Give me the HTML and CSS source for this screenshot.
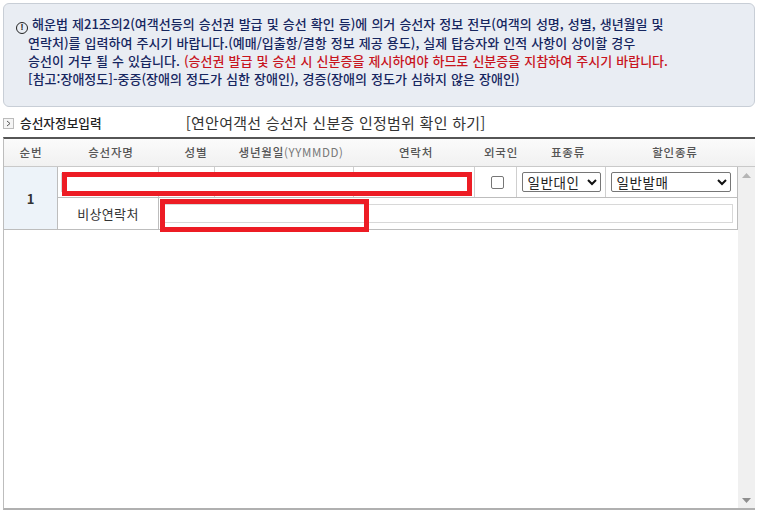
FILE: index.html
```html
<!DOCTYPE html>
<html lang="ko">
<head>
  <meta charset="UTF-8">
  <title>승선자정보입력</title>
  <link rel="stylesheet" href="styles.css">
</head>
<body>
  <div class="notice">
    <p><span class="notice-icon">!</span> 해운법 제21조의2(여객선등의 승선권 발급 및 승선 확인 등)에 의거 승선자 정보 전부(여객의 성명, 성별, 생년월일 및</p>
    <p class="indent">연락처)를 입력하여 주시기 바랍니다.(예매/입출항/결항 정보 제공 용도), 실제 탑승자와 인적 사항이 상이할 경우</p>
    <p class="indent">승선이 거부 될 수 있습니다. <span class="red">(승선권 발급 및 승선 시 신분증을 제시하여야 하므로 신분증을 지참하여 주시기 바랍니다.</span></p>
    <p class="indent">[참고:장애정도]-중증(장애의 정도가 심한 장애인), 경증(장애의 정도가 심하지 않은 장애인)</p>
  </div>

  <div class="title-row">
    <span class="arrow-box">
      <svg width="7" height="7" viewBox="0 0 7 7"><path d="M2 1l3 2.5L2 6" fill="none" stroke="#555" stroke-width="1"/></svg>
    </span>
    <span class="title">승선자정보입력</span>
    <span class="range-link">[연안여객선 승선자 신분증 인정범위 확인 하기]</span>
  </div>

  <div class="grid-wrap">
    <div class="grid-head">
      <div class="head-no">순번</div>
      <div class="head-name">승선자명</div>
      <div class="head-sex">성별</div>
      <div class="head-birth">생년월일<span class="thin">(YYMMDD)</span></div>
      <div class="head-tel">연락처</div>
      <div class="head-foreign">외국인</div>
      <div class="head-ticket">표종류</div>
      <div class="head-discount">할인종류</div>
    </div>

    <div class="grid-body">
      <div class="rows">
        <div class="passenger">
          <div class="no-cell">1</div>
          <div class="passenger-rows">
            <div class="row-top">
              <div class="cell col-name"><input class="text-input" type="text"></div>
              <div class="cell col-sex"></div>
              <div class="cell col-birth"></div>
              <div class="cell col-tel"></div>
              <div class="cell col-foreign"><span class="check"></span></div>
              <div class="cell col-ticket">
                <span class="select select-short">일반대인<svg width="10" height="7" viewBox="0 0 10 7"><path d="M1 1l4 4 4-4" fill="none" stroke="#111" stroke-width="2"/></svg></span>
              </div>
              <div class="cell col-discount">
                <span class="select select-long">일반발매<svg width="10" height="7" viewBox="0 0 10 7"><path d="M1 1l4 4 4-4" fill="none" stroke="#111" stroke-width="2"/></svg></span>
              </div>
            </div>
            <div class="row-bottom">
              <div class="cell col-name emergency">비상연락처</div>
              <div class="cell emergency-input"><input class="text-input" type="text"></div>
            </div>
          </div>
        </div>
      </div>
      <div class="scrollbar">
        <svg width="9" height="5" viewBox="0 0 9 5"><path d="M4.5 0L9 5H0z" fill="#b5b5b5"/></svg>
        <svg width="9" height="5" viewBox="0 0 9 5"><path d="M0 0h9L4.5 5z" fill="#8e8e8e"/></svg>
      </div>
    </div>

    <div class="mark mark-wide"></div>
    <div class="mark mark-short"></div>
  </div>
</body>
</html>
```

FILE: styles.css
```css
* {
  box-sizing: border-box;
}
html, body {
  height: 100%;
}
body {
  margin: 0;
  padding: 3px 2px 5px 3px;
  background: #fff;
  font-family: "Noto Sans CJK KR", "Liberation Sans", sans-serif;
  color: #222;
  display: flex;
  flex-direction: column;
  overflow: hidden;
}
p {
  margin: 0;
}
.notice {
  height: 104px;
  padding: 11px 12px 0 12px;
  background: #e9edf3;
  border: 1px solid #c8ced6;
  border-radius: 6px;
  color: #16265f;
  font-size: 13px;
  font-weight: 500;
  line-height: 17.9px;
  word-spacing: 0.45px;
  white-space: nowrap;
}
.indent {
  padding-left: 12px;
}
.red {
  color: #c8141e;
}
.notice-icon {
  display: inline-block;
  width: 12px;
  height: 12px;
  border: 1.5px solid #222;
  border-radius: 50%;
  color: #222;
  font: bold 9px/9px "Liberation Sans", sans-serif;
  text-align: center;
  vertical-align: -1px;
}
.title-row {
  height: 30px;
  display: flex;
  align-items: center;
  font-size: 13px;
  white-space: nowrap;
}
.arrow-box {
  width: 11px;
  height: 11px;
  margin-top: 3px;
  border: 1px solid #bbb;
  background: #f5f5f5;
  display: flex;
  align-items: center;
  justify-content: center;
}
.title {
  margin-left: 6px;
  font-weight: 500;
  font-size: 12.7px;
  color: #222;
}
.range-link {
  margin-left: 84px;
  font-size: 15px;
  letter-spacing: 0.25px;
  color: #333;
}
.grid-wrap {
  position: relative;
  flex: 1;
  display: flex;
  flex-direction: column;
  border-top: 2px solid #555;
  border-left: 1px solid #bdbdbd;
  border-bottom: 2px solid #b0b0b0;
}
.grid-head {
  height: 28px;
  flex: none;
  display: flex;
  align-items: center;
  padding-bottom: 2px;
  background: linear-gradient(#fbfbfb, #f1f1f1);
  border-bottom: 1px solid #c9c9c9;
  font-size: 11.5px;
  font-weight: 500;
  letter-spacing: 0.8px;
  color: #555;
  text-align: center;
}
.thin {
  font-weight: 400;
  letter-spacing: 0.6px;
  color: #777;
}
.head-no {
  width: 54px;
}
.head-name {
  width: 106px;
}
.head-sex {
  width: 64px;
}
.head-birth {
  width: 126px;
}
.head-tel {
  width: 124px;
}
.head-foreign {
  width: 46px;
}
.head-ticket {
  width: 88px;
}
.head-discount {
  width: 126px;
}
.col-name {
  width: 101px;
}
.col-sex {
  width: 56px;
}
.col-birth {
  width: 139px;
}
.col-tel {
  width: 121px;
}
.col-foreign {
  width: 42px;
  padding-left: 3px;
}
.col-ticket {
  width: 89px;
}
.col-discount {
  flex: 1;
  padding-right: 2px;
}
.grid-body {
  flex: 1;
  display: flex;
}
.rows {
  flex: 1;
  min-width: 0;
}
.passenger {
  display: flex;
  height: 63px;
  border-bottom: 1px solid #bdbdbd;
  border-right: 1px solid #bdbdbd;
}
.no-cell {
  width: 54px;
  flex: none;
  display: flex;
  align-items: center;
  justify-content: center;
  background: #edf3f9;
  border-right: 1px solid #bdbdbd;
  font-size: 13px;
  font-weight: 700;
  color: #333;
}
.passenger-rows {
  flex: 1;
  min-width: 0;
}
.row-top {
  height: 31px;
  display: flex;
  border-bottom: 1px solid #bdbdbd;
}
.row-bottom {
  height: 31px;
  display: flex;
}
.cell {
  display: flex;
  align-items: center;
  justify-content: center;
  border-right: 1px solid #cfcfcf;
}
.row-top .col-name {
  padding: 0 3px;
}
.row-top .col-discount {
  border-right: none;
}
.emergency {
  font-size: 13px;
  letter-spacing: 0.3px;
  color: #333;
  border-right: 1px solid #bdbdbd;
}
.emergency-input {
  flex: 1;
  min-width: 0;
  border-right: none;
  padding: 0 4px;
}
.text-input {
  width: 100%;
  height: 19px;
  border: 1px solid #d8d8d8;
  background: #fff;
}
.check {
  width: 13px;
  height: 13px;
  border: 1px solid #767676;
  border-radius: 2px;
  background: #fff;
}
.select {
  height: 20px;
  display: flex;
  align-items: center;
  justify-content: space-between;
  border: 1px solid #767676;
  border-radius: 2px;
  background: #fff;
  padding: 0 3px 0 5px;
  font-size: 13.5px;
  letter-spacing: 0.6px;
  color: #222;
}
.select-short {
  width: 79px;
}
.select-long {
  width: 120px;
}
.scrollbar {
  width: 17px;
  flex: none;
  background: #f0f0f0;
  display: flex;
  flex-direction: column;
  align-items: center;
  justify-content: space-between;
  padding: 6px 0 5px;
}
.mark {
  position: absolute;
  border: 5px solid #ed1c24;
}
.mark-wide {
  left: 58px;
  top: 33px;
  width: 410px;
  height: 24px;
  background: #fff;
}
.mark-short {
  left: 156px;
  top: 60px;
  width: 209px;
  height: 33px;
}
```
